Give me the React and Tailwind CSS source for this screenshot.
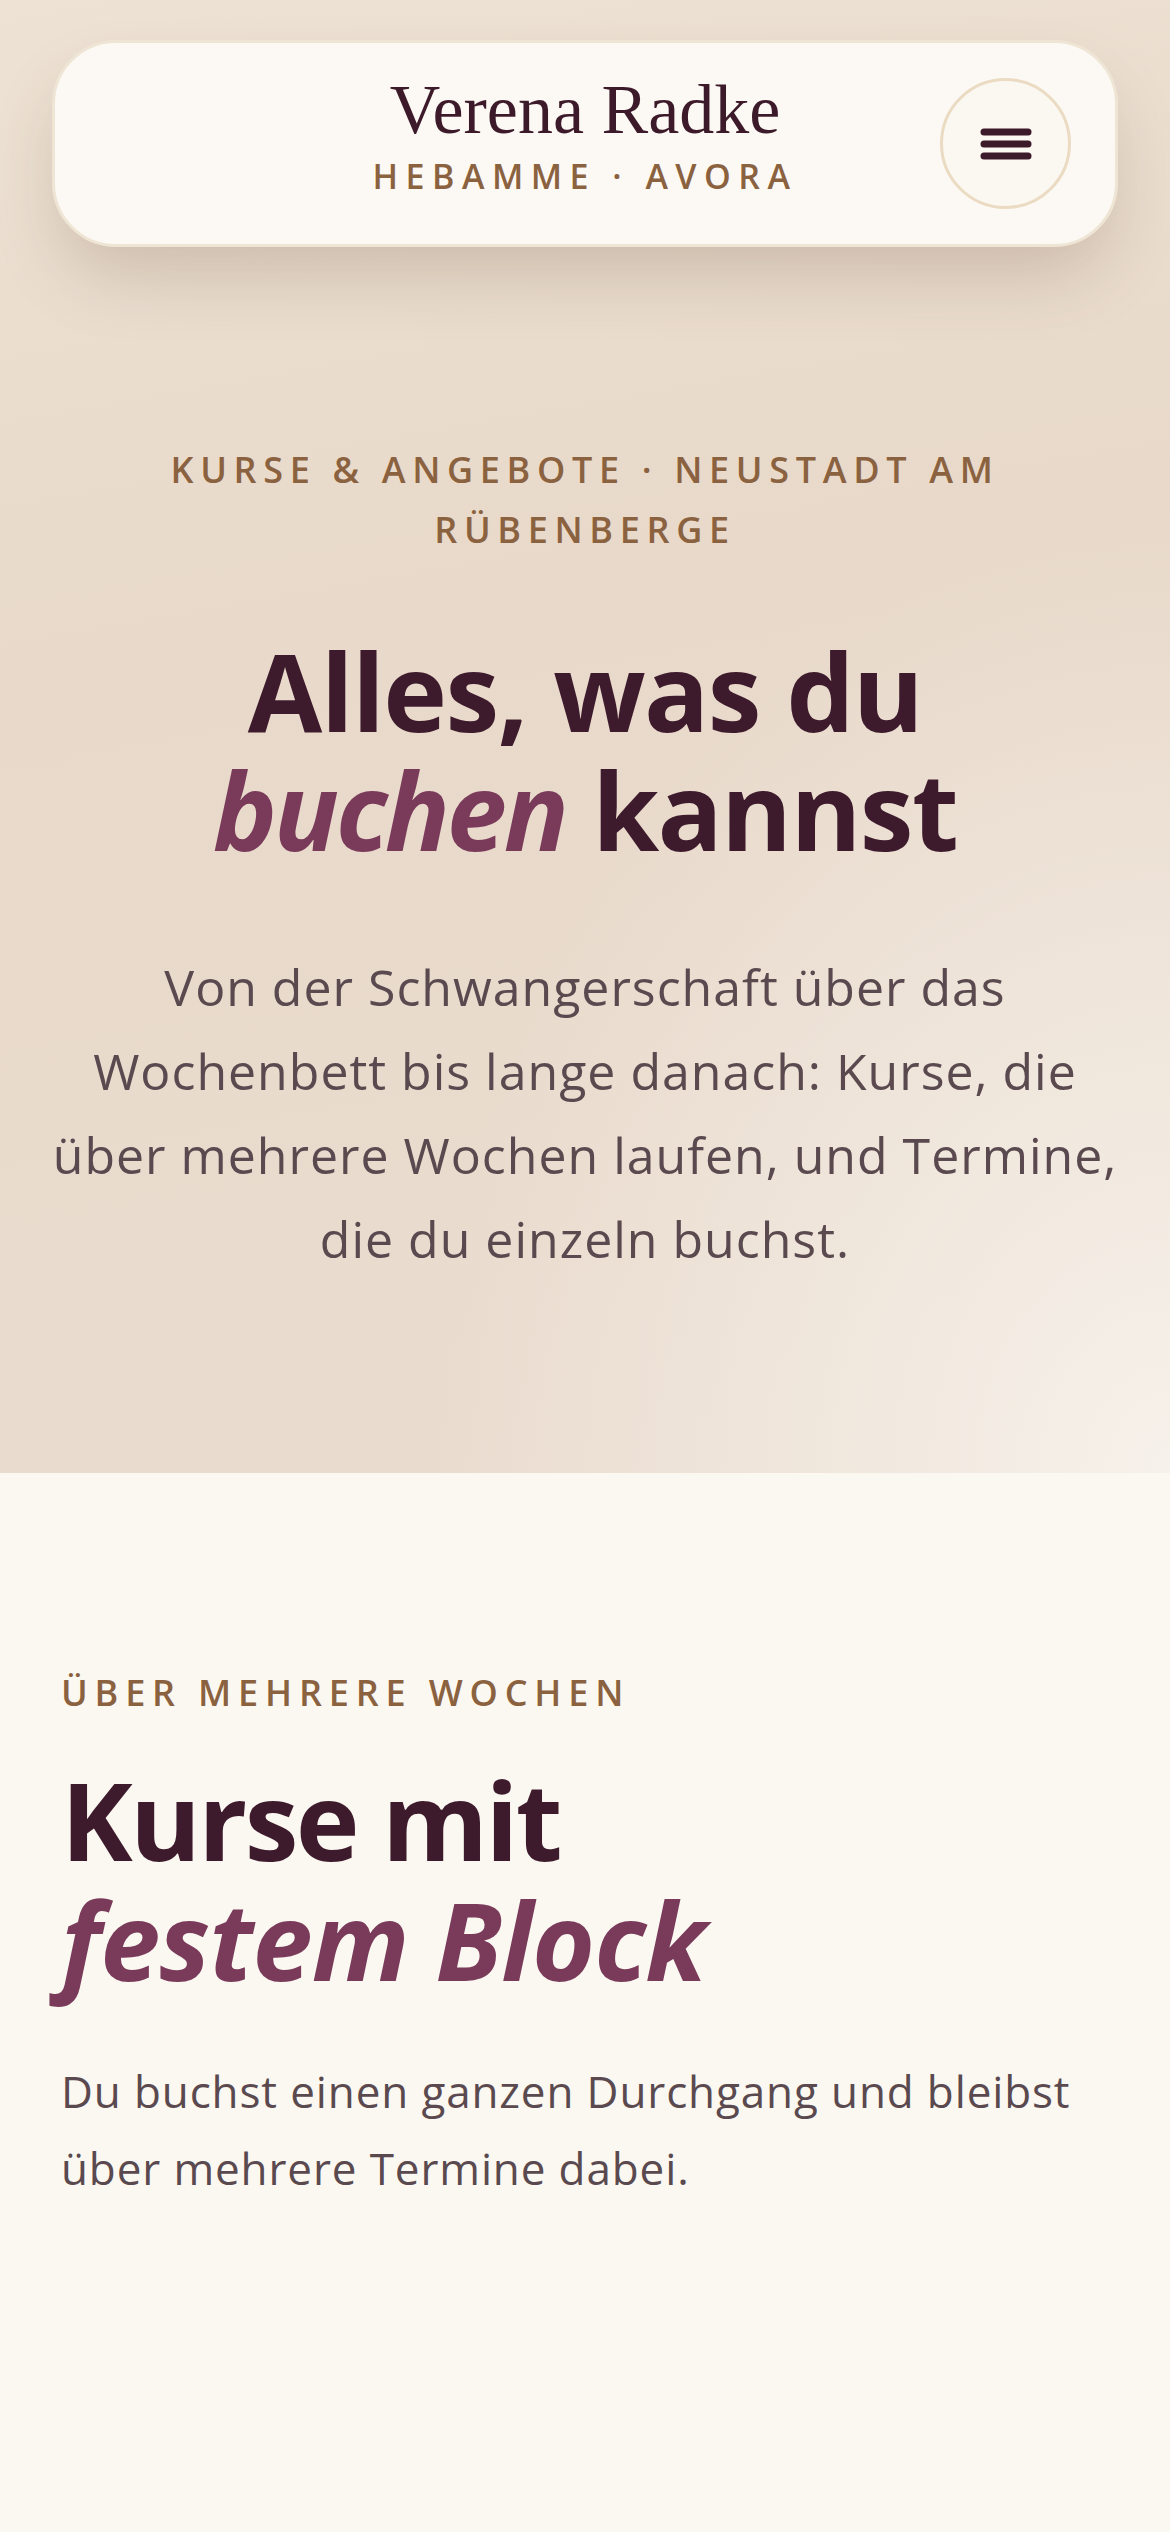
import React from "react";

const sans = { fontFamily: '"Open Sans", "Noto Sans", sans-serif' };

const MenuButton = () => (
  <button className="flex h-[131px] w-[131px] items-center justify-center rounded-full border-[3px] border-[#eadbc2] bg-[#fbf7f1]">
    <svg width="52" height="36" viewBox="0 0 52 36" fill="none">
      <line x1="4" y1="6" x2="48" y2="6" stroke="#3d1a2a" strokeWidth="7" strokeLinecap="round" />
      <line x1="4" y1="18" x2="48" y2="18" stroke="#3d1a2a" strokeWidth="7" strokeLinecap="round" />
      <line x1="4" y1="30" x2="48" y2="30" stroke="#3d1a2a" strokeWidth="7" strokeLinecap="round" />
    </svg>
  </button>
);

const Header = () => (
  <header className="grid h-[207px] grid-cols-[1fr_auto_1fr] items-center rounded-[64px] border-[3px] border-[#efe5d5] bg-[#fcf9f4] px-[44px] shadow-[0_36px_70px_-12px_rgba(90,60,35,0.22)]">
    <div />
    <div className="mb-[20px] flex flex-col items-center">
      <span
        className="text-[70px] leading-[80px] text-[#3d1a2a]"
        style={{ fontFamily: '"Liberation Serif", "DejaVu Serif", serif' }}
      >
        Verena Radke
      </span>
      <span className="mt-[4px] text-[34px] font-semibold leading-[44px] tracking-[0.22em] text-[#8b6240]" style={sans}>
        HEBAMME · AVORA
      </span>
    </div>
    <div className="flex justify-end">
      <MenuButton />
    </div>
  </header>
);

export default function App() {
  return (
    <div className="min-h-[2532px] bg-[#fbf8f1]" style={sans}>
      <section className="h-[1473px] bg-[radial-gradient(ellipse_at_100%_100%,#f6f1ea_0%,rgba(246,241,234,0)_45%),linear-gradient(170deg,#ede2d4_0%,#e8d9ca_40%,#eadccf_100%)] px-[52px] pt-[40px]">
        <Header />
        <div className="mx-auto mt-[193px] flex max-w-[1066px] flex-col items-center text-center">
          <p className="text-[36px] font-semibold leading-[60px] tracking-[0.185em] text-[#8b6240]">
            KURSE &amp; ANGEBOTE · NEUSTADT AM RÜBENBERGE
          </p>
          <h1 className="mt-[71px] max-w-[900px] text-[108px] font-bold leading-[119px] tracking-[-0.015em] text-[#3d1a2c]">
            Alles, was du <em className="tracking-[-0.03em] text-[#7a3b5b]">buchen</em> kannst
          </h1>
          <p className="mt-[76px] text-[50px] leading-[84px] tracking-[0.02em] text-[#5a4a4f]">
            Von der Schwangerschaft über das Wochenbett bis lange danach: Kurse, die über mehrere Wochen laufen, und Termine, die du einzeln buchst.
          </p>
        </div>
      </section>

      <section className="px-[61px] pt-[190px]">
        <p className="text-[36px] font-semibold leading-[60px] tracking-[0.19em] text-[#8b6240]">
          ÜBER MEHRERE WOCHEN
        </p>
        <h2 className="mt-[37px] text-[108px] font-bold leading-[120px] tracking-[-0.025em] text-[#3d1a2c]">
          Kurse mit
          <br />
          <em className="tracking-[-0.01em] text-[#7a3b5b]">festem Block</em>
        </h2>
        <p className="mt-[53px] max-w-[1050px] text-[44px] leading-[77px] tracking-[0.02em] text-[#5a4a4f]">
          Du buchst einen ganzen Durchgang und bleibst über mehrere Termine dabei.
        </p>
      </section>
    </div>
  );
}
